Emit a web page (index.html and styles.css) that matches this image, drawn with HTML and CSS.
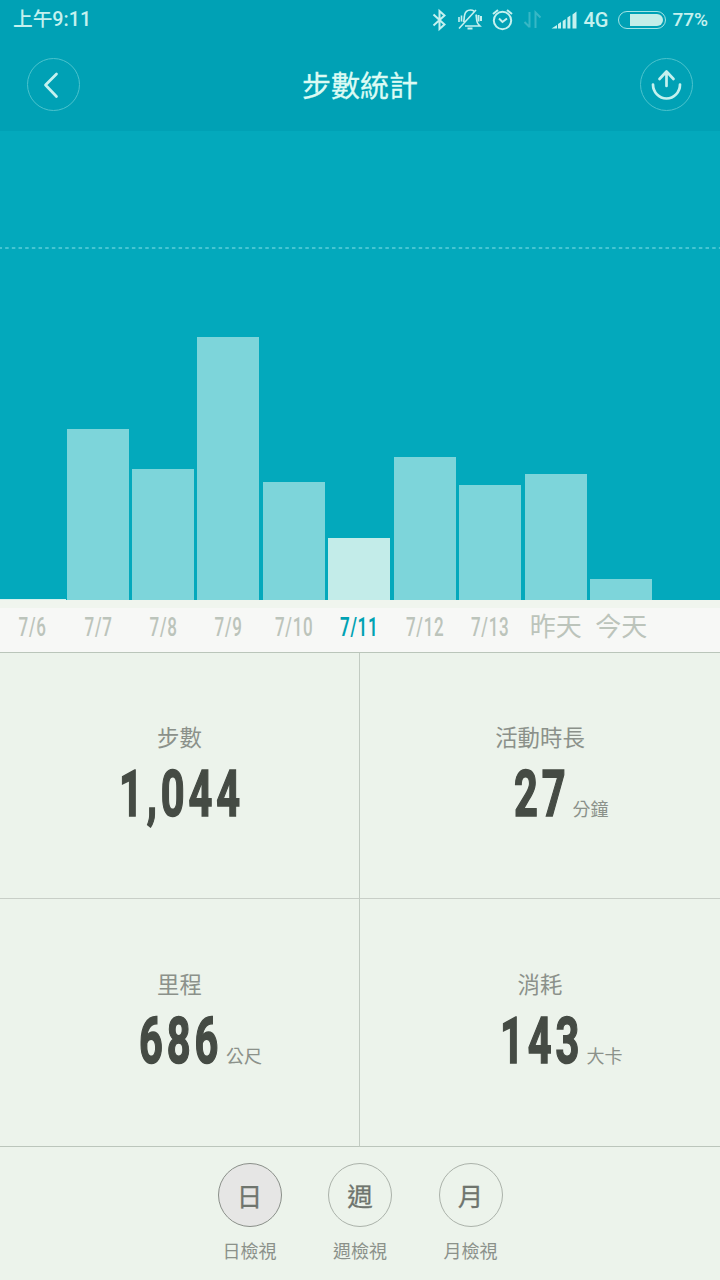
FILE: index.html
```html
<!DOCTYPE html>
<html lang="zh-Hant">
<head>
<meta charset="utf-8">
<title>步數統計</title>
<link rel="stylesheet" href="styles.css">
</head>
<body>
<div class="app">
  <header class="top">
    <div class="status">
      <span class="clock">上午9:11</span>
      <svg class="status-icons" width="160" height="40" viewBox="0 0 160 40" fill="none" stroke="currentColor" stroke-width="2">
        <path d="M2.500 14.500 13.500 24.500 8.500 29V11l5 4.500-11 10"/>
        <g stroke-width="1.600">
          <path d="M32.500 22c.8-2 .5-4 1-6.500.6-3.500 3-5.500 6-5.500 1.500 0 2.500.4 3.500 1M45 14.500c.6 2.500.2 6 1.500 8.500.6 1.200 1.500 2 2.500 3H34M45 10 28 28.500M28 17v5M30.500 15.500v6"/>
          <path d="M47.500 15v6.500M50 16v5" stroke-width="2"/>
          <path d="M36.500 28.500h5" stroke-width="2"/>
        </g>
        <circle cx="71.500" cy="20.500" r="8.700"/>
        <path d="M68 18.500 71.500 22l4.500-3.500M62 14l5-4M81 14l-5-4"/>
        <path d="M98.500 12v15.500M93.500 22l5 5M104.500 28V12.500l5 5" stroke="#37b7c5" stroke-width="2"/>
        <path d="M120.500 28.500 126 25v3.500zM127 24l3-2v6.500h-3zM131.700 21l3-2v9.500h-3zM136.400 17.500l3-2v13h-3zM141.500 14.500l4-3v17h-4z" stroke="none" fill="currentColor"/>
      </svg>
      <span class="network">4G</span>
      <span class="battery"><span class="battery-level"></span></span>
      <span class="percent">77%</span>
    </div>
    <div class="title-bar">
      <button class="round" aria-label="返回">
        <svg width="51" height="51" viewBox="0 0 51 51"><path d="M28.500 15 17.500 26 28.500 37.500"/></svg>
      </button>
      <h1>步數統計</h1>
      <button class="round" aria-label="分享">
        <svg width="51" height="51" viewBox="0 0 51 51"><path d="M25.500 27V12.500M18.500 20l7-7.500 7 7.500M12 25.500a13.500 14 0 0 0 27 0"/></svg>
      </button>
    </div>
  </header>
  <section class="chart">
    <svg class="goal" width="720" height="2"><path d="M-1.500 1H720" stroke="#46c5d2" stroke-width="2" stroke-dasharray="3.500 3.170"/></svg>
    <div class="bars">
      <div class="bar" style="height:1px"></div>
      <div class="bar" style="height:171px"></div>
      <div class="bar" style="height:131px"></div>
      <div class="bar" style="height:263px"></div>
      <div class="bar" style="height:118px"></div>
      <div class="bar active" style="height:62px"></div>
      <div class="bar" style="height:143px"></div>
      <div class="bar" style="height:115px"></div>
      <div class="bar" style="height:126px"></div>
      <div class="bar" style="height:21px"></div>
    </div>
  </section>
  <div class="axis">
    <div><span>7/6</span></div><div><span>7/7</span></div><div><span>7/8</span></div><div><span>7/9</span></div><div><span>7/10</span></div><div class="selected"><span>7/11</span></div><div><span>7/12</span></div><div><span>7/13</span></div><div class="word">昨天</div><div class="word">今天</div>
  </div>
  <main class="stats">
    <section class="stat"><h2>步數</h2><div class="value"><strong class="w4"><b>1,044</b></strong></div></section>
    <section class="stat"><h2>活動時長</h2><div class="value"><strong class="w2"><b>27</b></strong><small>分鐘</small></div></section>
    <section class="stat"><h2>里程</h2><div class="value"><strong class="w3"><b>686</b></strong><small>公尺</small></div></section>
    <section class="stat"><h2>消耗</h2><div class="value"><strong class="w3"><b>143</b></strong><small>大卡</small></div></section>
  </main>
  <nav class="views">
    <div class="view current"><span class="disc">日</span><span>日檢視</span></div>
    <div class="view"><span class="disc">週</span><span>週檢視</span></div>
    <div class="view"><span class="disc">月</span><span>月檢視</span></div>
  </nav>
</div>
</body>
</html>
```
FILE: styles.css
```css
* { box-sizing: border-box; }
body { margin: 0; font-family: Roboto, "Noto Sans CJK TC", sans-serif; }
.app { width: 720px; height: 1280px; display: flex; flex-direction: column; overflow: hidden; background: #ecf3eb; }
.top { height: 131px; background: #00a1b5; color: #c5f1ef; flex: none; }
.status { height: 40px; display: flex; align-items: center; padding: 0 12px 0 13px; font-weight: 500; font-size: 20px; line-height: 40px; white-space: nowrap; }
.clock { width: 419px; height: 40px; font-size: 19.700px; }
.status-icons { margin-right: -8px; flex: none; }
.network { width: 35px; }
.battery { width: 48px; height: 18px; border: 1.500px solid #a4e4e5; border-radius: 9px; padding: 2px 2px 2px 11px; margin-right: 6px; flex: none; }
.battery-level { display: block; height: 100%; background: #c5ede8; border-radius: 0 7px 7px 0; }
.percent { font-size: 19px; }
.title-bar { display: flex; justify-content: space-between; align-items: center; padding: 18px 27px 0 27px; }
.title-bar h1 { margin: 0; height: 52px; font-size: 29px; line-height: 56px; font-weight: 400; color: #dcfbf4; -webkit-text-stroke: .3px #dcfbf4; }
.round { width: 53px; height: 53px; padding: 0; border: 1px solid #4bc3cd; border-radius: 50%; background: none; color: #c5f1ef; }
.round svg { display: block; fill: none; stroke: currentColor; stroke-width: 2.700; stroke-linecap: round; stroke-linejoin: round; }
.chart { height: 469px; flex: none; background: #03a9bc; display: flex; flex-direction: column; justify-content: space-between; padding-top: 116px; }
.goal { display: block; flex: none; }
.bars { display: flex; align-items: flex-end; gap: 3.430px; padding-left: 1.200px; }
.bar { width: 62px; background: #7dd5da; }
.bar:first-child { width: 66px; margin: 0 -2.800px 0 -1.200px; background: #d4f1ed; }
.bar.active { background: #c3ece9; }
.axis { height: 53px; flex: none; display: flex; background: #f7f8f6; border-top: 8px solid #f0f5ee; border-bottom: 1px solid #bac5ba; color: #bcc4bb; font-size: 25px; line-height: 39px; }
.axis div { width: 65.400px; text-align: center; white-space: nowrap; }
.axis span { display: inline-block; font-weight: 500; letter-spacing: 1px; transform: scaleX(.68); margin: 0 -10px; }
.axis .selected { color: #00a2b3; }
.axis .selected span { font-weight: 600; }
.axis .word { font-size: 26px; line-height: 38px; }
.stats { display: grid; grid-template-columns: 360px 360px; grid-template-rows: 246px 248px; flex: none; }
.stat { border-bottom: 1px solid #c8cec7; padding-top: 68px; }
.stat:nth-child(odd) { border-right: 1px solid #c2cbc2; }
.stat:nth-child(n+3) { padding-top: 69px; border-bottom-color: #bbc5bb; }
.stat h2 { margin: 0; font-size: 22.400px; line-height: 34px; font-weight: 400; color: #8b918a; text-align: center; }
.value { display: grid; grid-template-columns: 1fr auto 1fr; line-height: 78px; height: 76px; color: #454b44; }
.value strong { grid-column: 2; display: block; height: 76px; }
.value b { display: block; font-size: 65px; font-weight: 700; letter-spacing: 6px; transform: scaleX(.64); transform-origin: 0 0; white-space: nowrap; -webkit-text-stroke: 1.600px #454b44; }
.w2 { width: 53px; }
.w3 { width: 81px; }
.w4 { width: 122px; }
.value small { font-size: 18px; line-height: 26px; color: #8b918a; padding: 42px 0 0 6px; }
.views { display: flex; justify-content: center; gap: 46.500px; padding: 16px 0 0 0; color: #8b918a; }
.view { width: 64px; display: flex; flex-direction: column; align-items: center; font-size: 18px; line-height: 26px; white-space: nowrap; }
.disc { width: 64px; height: 64px; border: 1px solid #abb2aa; border-radius: 50%; text-align: center; font-size: 25.500px; line-height: 67px; color: #6f756e; margin-bottom: 12px; -webkit-text-stroke: .3px #6f756e; }
.current .disc { background: #e6e6e5; border-color: #8a8f89; }
```
